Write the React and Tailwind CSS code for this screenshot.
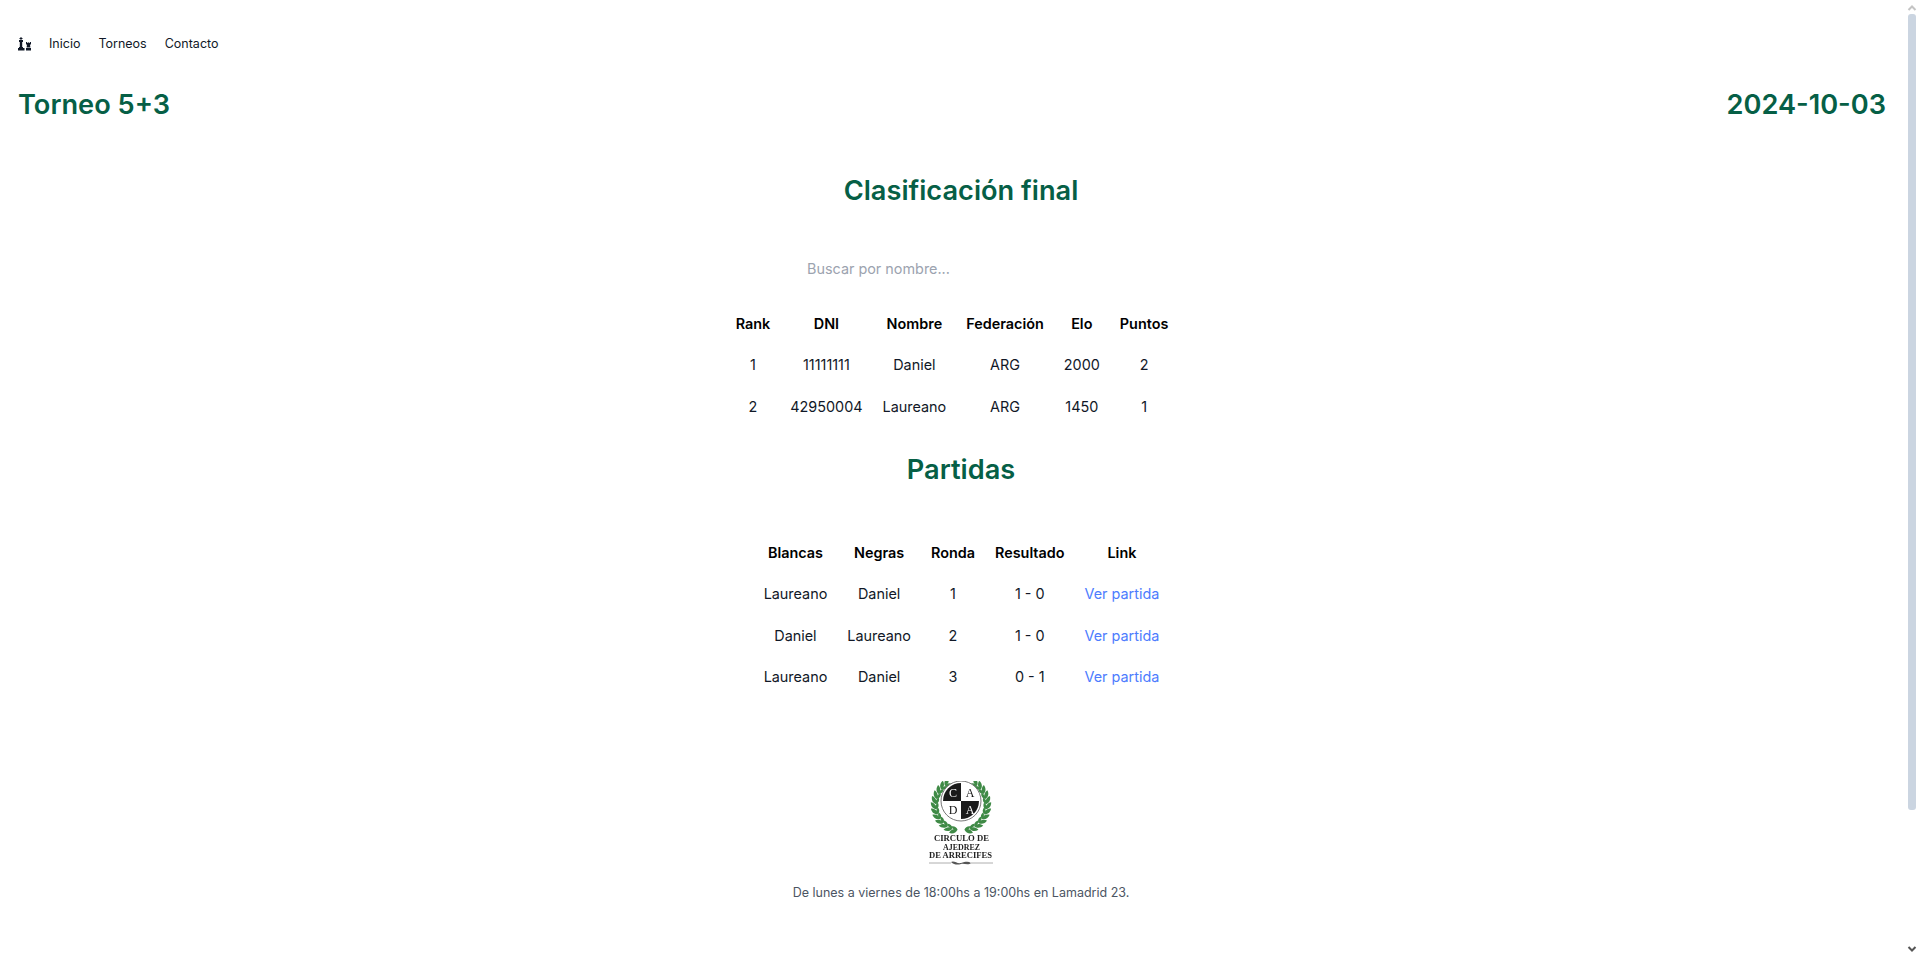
const standings = [
  { rank: 1, dni: "11111111", nombre: "Daniel", fed: "ARG", elo: 2000, puntos: 2 },
  { rank: 2, dni: "42950004", nombre: "Laureano", fed: "ARG", elo: 1450, puntos: 1 },
];

const games = [
  { blancas: "Laureano", negras: "Daniel", ronda: 1, resultado: "1 - 0" },
  { blancas: "Daniel", negras: "Laureano", ronda: 2, resultado: "1 - 0" },
  { blancas: "Laureano", negras: "Daniel", ronda: 3, resultado: "0 - 1" },
];

const thClass = "px-2.5 py-3 font-semibold text-center text-black leading-[17px]";
const tdClass = "px-2.5 py-3 text-center leading-[17.5px]";
const headingClass = "text-[27.2px] leading-[34px] font-semibold text-[#065f46]";

function ChessIcon() {
  return (
    <svg width="13" height="14" viewBox="0 0 13 14" fill="#111827">
      <rect x="2.500" y="0" width="1" height="3" />
      <rect x="1.500" y="1" width="3" height="1" />
      <rect x="1" y="3" width="4" height="2" />
      <rect x="1.800" y="5" width="2.400" height="5" />
      <rect x="1" y="10" width="4" height="1" />
      <rect x="0" y="11" width="6.500" height="2.500" />
      <path d="M8 5h1.200v1h1V5h.6v1h1V5H13v2.500h-1l.4 3h-3.800l.4-3H8z" />
      <rect x="8" y="11" width="5" height="2.500" />
    </svg>
  );
}

// one pointed laurel leaf, base at (x, y), pointing along angle a
function Leaf({ x, y, a, len }) {
  return (
    <path
      d={`M0 0C${len * 0.3} ${-len * 0.3} ${len * 0.7} ${-len * 0.26} ${len} 0C${len * 0.7} ${len * 0.26} ${len * 0.3} ${len * 0.3} 0 0z`}
      fill="#3f8a46"
      transform={`translate(${x} ${y}) rotate(${a})`}
    />
  );
}

function Branch() {
  const leaves = [];
  for (let i = 0; i < 12; i++) {
    const deg = 262 - i * 12;
    const t = (deg * Math.PI) / 180;
    const x = 32 + 25 * Math.cos(t);
    const y = 24 - 25 * Math.sin(t);
    const a = (Math.atan2(Math.cos(t), Math.sin(t)) * 180) / Math.PI;
    leaves.push({ x, y, a });
  }
  return (
    <g>
      {leaves.map((l, i) => (
        <g key={i}>
          <Leaf x={l.x} y={l.y} a={l.a - 28} len={9} />
          <Leaf x={l.x} y={l.y} a={l.a + 22} len={7} />
        </g>
      ))}
    </g>
  );
}

function Logo() {
  return (
    <svg width="66" height="86" viewBox="0 0 66 86" className="block blur-[0.35px]">
      <Branch />
      <g transform="translate(64 0) scale(-1 1)">
        <Branch />
      </g>
      <circle cx="32" cy="20" r="20" fill="#fff" stroke="#777" strokeWidth="1" />
      <path d="M32 2A18 18 0 0 0 14 20H32z" fill="#1a1a1a" />
      <path d="M32 38A18 18 0 0 0 50 20H32z" fill="#1a1a1a" />
      <g fontFamily="'Liberation Serif', serif" fontSize="12" textAnchor="middle">
        <text x="24" y="16" fill="#fff">C</text>
        <text x="41" y="16" fill="#111">A</text>
        <text x="24" y="33" fill="#111">D</text>
        <text x="41" y="33" fill="#fff">A</text>
      </g>
      <g fontFamily="'Liberation Serif', serif" fontSize="8.500" fontWeight="700" fill="#222">
        <text x="5" y="60" textLength="55" lengthAdjust="spacingAndGlyphs">CIRCULO DE</text>
        <text x="14" y="68.500" textLength="37" lengthAdjust="spacingAndGlyphs">AJEDREZ</text>
        <text x="0" y="77" textLength="63" lengthAdjust="spacingAndGlyphs">DE ARRECIFES</text>
      </g>
      <path d="M0 82h22M42 82h22" stroke="#999" strokeWidth="0.800" />
      <path d="M22 81c3-2 6 2 10 1s7-2 10 0c-3 3-7 0-10 1s-7 1-10-2z" fill="#555" />
    </svg>
  );
}

function Scrollbar() {
  return (
    <aside className="w-[15px] h-[957px] shrink-0 flex flex-col items-center bg-white">
      <svg width="10" height="8" viewBox="0 0 10 8" className="mt-1 shrink-0" fill="none" stroke="#c4c4c4" strokeWidth="2">
        <path d="M1.500 6 5 2.500 8.500 6" />
      </svg>
      <div className="mt-[2px] w-[8px] h-[796px] rounded-[3px] bg-[#cbd5e1]" />
      <svg width="10" height="8" viewBox="0 0 10 8" className="mt-auto mb-1 shrink-0" fill="none" stroke="#555" strokeWidth="2">
        <path d="M1.500 2 5 5.500 8.500 2" />
      </svg>
    </aside>
  );
}

export default function App() {
  return (
    <div className="flex h-[957px] overflow-hidden bg-white text-[14.4px] text-[#111827] font-['Inter',sans-serif]">
      <main className="flex-1 min-w-0">
        <nav className="flex items-center gap-[18px] px-[18px] pt-[36px] text-[12.5px] leading-[16px]">
          <ChessIcon />
          <a>Inicio</a>
          <a>Torneos</a>
          <a>Contacto</a>
        </nav>
        <header className={`flex justify-between px-[18px] pt-[36px] ${headingClass}`}>
          <h1>Torneo 5+3</h1>
          <h1>2024-10-03</h1>
        </header>
        <section className="flex flex-col items-center">
          <h2 className={`mt-[52px] pl-[18px] ${headingClass}`}>Clasificación final</h2>
          <input
            placeholder="Buscar por nombre..."
            className="mt-[52px] ml-[20px] w-[310px] text-[14.4px] leading-[17px] outline-none placeholder:text-[#9ca3af]"
          />
          <table className="mt-[26px]">
            <thead>
              <tr>
                <th className={thClass}>Rank</th>
                <th className={thClass}>DNI</th>
                <th className={thClass}>Nombre</th>
                <th className={thClass}>Federación</th>
                <th className={thClass}>Elo</th>
                <th className={thClass}>Puntos</th>
              </tr>
            </thead>
            <tbody>
              {standings.map((p) => (
                <tr key={p.rank}>
                  <td className={tdClass}>{p.rank}</td>
                  <td className={tdClass}>{p.dni}</td>
                  <td className={tdClass}>{p.nombre}</td>
                  <td className={tdClass}>{p.fed}</td>
                  <td className={tdClass}>{p.elo}</td>
                  <td className={tdClass}>{p.puntos}</td>
                </tr>
              ))}
            </tbody>
          </table>
          <h2 className={`mt-[26px] pl-[18px] ${headingClass}`}>Partidas</h2>
          <div className="mt-[45px] pl-[19px]">
            <table>
              <thead>
                <tr>
                  <th className={thClass}>Blancas</th>
                  <th className={thClass}>Negras</th>
                  <th className={thClass}>Ronda</th>
                  <th className={thClass}>Resultado</th>
                  <th className={thClass}>Link</th>
                </tr>
              </thead>
              <tbody>
                {games.map((g) => (
                  <tr key={g.ronda}>
                    <td className={tdClass}>{g.blancas}</td>
                    <td className={tdClass}>{g.negras}</td>
                    <td className={tdClass}>{g.ronda}</td>
                    <td className={tdClass}>{g.resultado}</td>
                    <td className={tdClass}>
                      <a className="text-[#4d7cfe]">Ver partida</a>
                    </td>
                  </tr>
                ))}
              </tbody>
            </table>
          </div>
        </section>
        <footer className="flex flex-col items-center mt-[83px] pl-[20px]">
          <Logo />
          <p className="mt-[18px] -translate-x-px text-[12.5px] leading-[16px] text-[#4b5563]">
            De lunes a viernes de 18:00hs a 19:00hs en Lamadrid 23.
          </p>
        </footer>
      </main>
      <Scrollbar />
    </div>
  );
}
